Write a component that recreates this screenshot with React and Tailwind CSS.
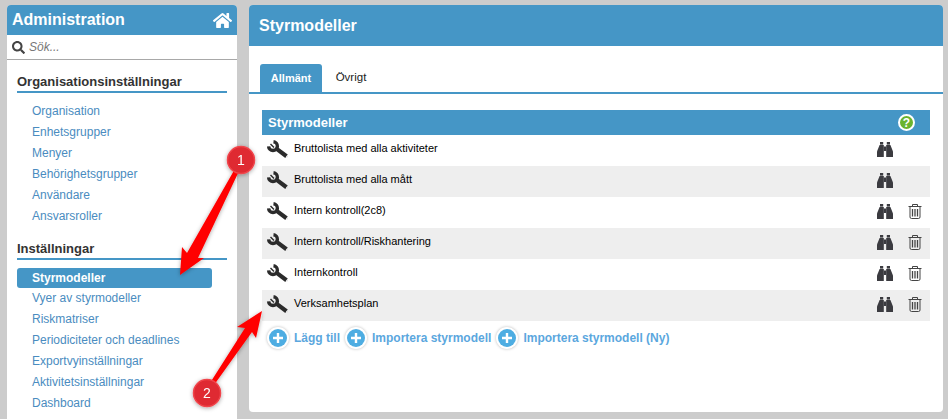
import { FaHome, FaSearch } from "react-icons/fa";

const orgLinks = ["Organisation", "Enhetsgrupper", "Menyer", "Behörighetsgrupper", "Användare", "Ansvarsroller"];
const settingLinks = [
  "Styrmodeller",
  "Vyer av styrmodeller",
  "Riskmatriser",
  "Periodiciteter och deadlines",
  "Exportvyinställningar",
  "Aktivitetsinställningar",
  "Dashboard",
];
const rows = [
  { name: "Bruttolista med alla aktiviteter", canDelete: false },
  { name: "Bruttolista med alla mått", canDelete: false },
  { name: "Intern kontroll(2c8)", canDelete: true },
  { name: "Intern kontroll/Riskhantering", canDelete: true },
  { name: "Internkontroll", canDelete: true },
  { name: "Verksamhetsplan", canDelete: true },
];
const actions = ["Lägg till", "Importera styrmodell", "Importera styrmodell (Ny)"];

function NavSection({ title, links, active }) {
  return (
    <div>
      <h3 className="h-[20px] border-b-2 border-[#4596c6] text-[13px] leading-[18px] font-bold text-[#333]">{title}</h3>
      <ul className="mt-[8px] w-[195px]">
        {links.map((link) => (
          <li
            key={link}
            className={`rounded-[3px] pl-[15px] text-[12px] leading-[20px] ${
              link === active ? "h-[20px] bg-[#4596c6] font-bold text-white" : "h-[21px] text-[#4a8cc0]"
            }`}
          >
            {link}
          </li>
        ))}
      </ul>
    </div>
  );
}

function WrenchIcon() {
  return (
    <svg width="24" height="20" viewBox="0 0 24 20" className="mb-[2px] shrink-0">
      <path d="M7.5 1.8 A4.4 4.4 0 1 1 2.6 6.4" fill="none" stroke="#2b2b2b" strokeWidth="3.4" />
      <path d="M4.5 4 L8 7.5" stroke="#2b2b2b" strokeWidth="1.4" />
      <path d="M10 8.4 L20.5 16.2" stroke="#2b2b2b" strokeWidth="4.2" />
      <circle cx="21" cy="16.6" r="0.9" fill="#ddd" />
    </svg>
  );
}

function BinocularsIcon() {
  return (
    <svg width="16" height="15" viewBox="0 0 16 15" className="mb-[3px] shrink-0" fill="#3b3b40">
      <rect x="3" y="0" width="3.2" height="2.6" />
      <rect x="9.8" y="0" width="3.2" height="2.6" />
      <path d="M0 15 L0 9.5 L2.6 3 L6.8 3 L6.8 15 Z" />
      <path d="M16 15 L16 9.5 L13.4 3 L9.2 3 L9.2 15 Z" />
      <rect x="6.8" y="4.5" width="2.4" height="4.5" />
    </svg>
  );
}

function TrashIcon() {
  return (
    <svg width="14" height="15" viewBox="0 0 14 15" className="mb-[2px]" fill="none" stroke="#444" strokeWidth="1">
      <path d="M0.5 2.5 H13.5" />
      <path d="M4.5 2.5 V0.5 H9.5 V2.5" />
      <path d="M2 2.5 V13 A1.5 1.5 0 0 0 3.5 14.5 H10.5 A1.5 1.5 0 0 0 12 13 V2.5" />
      <path d="M4.5 5 V12.5 M7 5 V12.5 M9.5 5 V12.5" strokeWidth="1.3" />
    </svg>
  );
}

function PlusButton() {
  return (
    <span className="flex h-[18px] w-[18px] items-center justify-center rounded-full bg-[#4eade2] shadow-[0_0_0_2px_#fff,0_0_3px_2px_#bbb]">
      <svg width="12" height="12" viewBox="0 0 12 12">
        <path d="M6 1v10M1 6h10" stroke="#fff" strokeWidth="2.4" />
      </svg>
    </span>
  );
}

function Marker({ x, y, n }) {
  return (
    <g>
      <circle cx={x} cy={y} r="13.5" fill="#df2a30" stroke="#f0444b" strokeWidth="1.5" />
      <text x={x} y={y + 5} textAnchor="middle" fontSize="14" fill="#fff" fontFamily="Liberation Sans">
        {n}
      </text>
    </g>
  );
}

export default function App() {
  return (
    <div className="relative flex h-[419px] w-[948px] gap-3 overflow-hidden bg-[#cccccc] pt-[5px] pl-[7px] font-['Liberation_Sans',Arial,sans-serif]">
      <aside className="h-[430px] w-[230px] shrink-0 rounded-t-[4px] bg-white">
        <div className="flex h-[30px] items-center justify-between rounded-t-[4px] bg-[#4596c6] pr-[5px] pl-[5px] text-white">
          <span className="text-[16px] font-bold">Administration</span>
          <FaHome className="text-[19px]" />
        </div>
        <div className="flex h-[25px] items-center gap-[4px] border-b border-[#a8a8a8] pl-[5px]">
          <FaSearch className="text-[13px] text-[#444]" />
          <span className="text-[12px] text-[#777] italic">Sök...</span>
        </div>
        <div className="px-[10px] pt-[13px]">
          <NavSection title="Organisationsinställningar" links={orgLinks} />
          <div className="mt-[13px]">
            <NavSection title="Inställningar" links={settingLinks} active="Styrmodeller" />
          </div>
        </div>
      </aside>

      <main className="h-[407px] w-[694px] shrink-0 overflow-hidden rounded-[4px] bg-white">
        <div className="flex h-[41px] items-center bg-[#4596c6] pl-[10px] text-[16px] font-bold text-white">Styrmodeller</div>
        <div className="mt-[18px] flex h-[30px] items-end border-b-2 border-[#4596c6] pl-[11px] text-[11px] font-bold">
          <span className="flex h-[28px] w-[62px] items-center justify-center rounded-t-[3px] bg-[#4596c6] text-white">Allmänt</span>
          <span className="flex h-[28px] w-[58px] items-center justify-center text-[11.5px] font-normal text-[#222]">Övrigt</span>
        </div>
        <div className="mt-[16px] ml-[13px] w-[668px]">
          <div className="flex h-[25px] items-center justify-between bg-[#4596c6] pr-[15px] pl-[6px] text-[13px] font-bold text-white">
            <span>Styrmodeller</span>
            <span className="flex h-[17px] w-[17px] items-center justify-center rounded-full border-2 border-white bg-[#6ab42d] text-[12px] leading-none font-bold">?</span>
          </div>
          {rows.map((row, i) => (
            <div key={row.name} className={`flex h-[31px] items-center pr-[8px] pl-[4px] ${i % 2 === 1 ? "bg-[#eeeeee]" : "bg-white"}`}>
              <WrenchIcon />
              <span className="ml-[4px] flex-1 pb-[5px] text-[11px] text-black">{row.name}</span>
              <BinocularsIcon />
              <span className="ml-[15px] flex w-[14px] justify-center">{row.canDelete && <TrashIcon />}</span>
            </div>
          ))}
          <div className="mt-[8px] flex h-[18px] items-center pl-[7px]">
            {actions.map((label) => (
              <div key={label} className="mr-[7px] flex items-center gap-[7px]">
                <PlusButton />
                <span className="text-[12px] font-bold text-[#5ba7de]">{label}</span>
              </div>
            ))}
          </div>
        </div>
      </main>

      <svg className="pointer-events-none absolute top-0 left-0" width="948" height="419" viewBox="0 0 948 419">
        <defs>
          <filter id="arrowShadow" x="-30%" y="-30%" width="160%" height="160%">
            <feDropShadow dx="0" dy="1" stdDeviation="2" floodColor="#000" floodOpacity="0.35" />
          </filter>
        </defs>
        <g filter="url(#arrowShadow)">
          <polygon points="240,169 198,258 204,258 180,275 182,247 187,253 236,167" fill="#ff0000" />
          <polygon points="210,383 245,328 237,327 262,311 256,338 252,332 214,385" fill="#ff0000" />
          <Marker x={241} y={160} n="1" />
          <Marker x={207} y={393} n="2" />
        </g>
      </svg>
    </div>
  );
}
